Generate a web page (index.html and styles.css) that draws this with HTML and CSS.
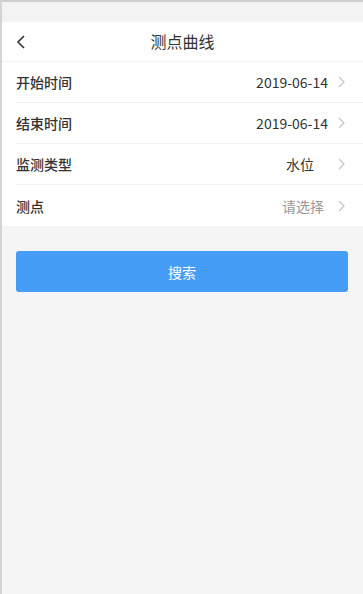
FILE: index.html
```html
<!DOCTYPE html>
<html>
    <head>
        <title>测点曲线</title>
        <link rel="stylesheet" href="styles.css">
    </head>
    <body>
        <div class="screen">
            <!-- status bar -->
            <div class="statusBar"></div>

            <!-- header -->
            <div class="header">
                <span class="back">
                    <svg width="10" height="14" viewBox="0 0 10 14"><path d="M8 1 L2 7 L8 13" fill="none" stroke="#333" stroke-width="1.6"/></svg>
                </span>
                <span class="title">测点曲线</span>
            </div>

            <!-- form list -->
            <div class="list">
                <div class="row">
                    <span class="label">开始时间</span>
                    <span class="value">2019-06-14</span>
                    <span class="arrow"><svg width="7" height="12" viewBox="0 0 7 12"><path d="M1 1 L6 6 L1 11" fill="none" stroke="#c4c4c4" stroke-width="1.2"/></svg></span>
                </div>
                <div class="row">
                    <span class="label">结束时间</span>
                    <span class="value">2019-06-14</span>
                    <span class="arrow"><svg width="7" height="12" viewBox="0 0 7 12"><path d="M1 1 L6 6 L1 11" fill="none" stroke="#c4c4c4" stroke-width="1.2"/></svg></span>
                </div>
                <div class="row">
                    <span class="label">监测类型</span>
                    <span class="value short">水位</span>
                    <span class="arrow"><svg width="7" height="12" viewBox="0 0 7 12"><path d="M1 1 L6 6 L1 11" fill="none" stroke="#c4c4c4" stroke-width="1.2"/></svg></span>
                </div>
                <div class="row">
                    <span class="label">测点</span>
                    <span class="value placeholder">请选择</span>
                    <span class="arrow"><svg width="7" height="12" viewBox="0 0 7 12"><path d="M1 1 L6 6 L1 11" fill="none" stroke="#c4c4c4" stroke-width="1.2"/></svg></span>
                </div>
            </div>

            <div class="actions">
                <button class="searchButton">搜索</button>
            </div>
        </div>
    </body>
</html>
```

FILE: styles.css
```css
html, body{
    margin: 0;
    height: 100%;
}

body{
    font-family: "Noto Sans CJK SC", "Noto Sans", sans-serif;
    color: #333;
}

.screen{
    height: 100%;
    box-sizing: border-box;
    border-top: 2px solid #cfcfcf;
    border-left: 2px solid #d4d4d4;
    background: #f5f5f5;
}

/* Status bar */

.statusBar{
    height: 20px;
    background: #f3f3f3;
}

/* Header */

.header{
    height: 39px;
    display: flex;
    align-items: center;
    justify-content: center;
    position: relative;
    background: #fff;
    border-bottom: 1px solid #f0f0f0;
}

.back{
    position: absolute;
    left: 14px;
    top: 13px;
    display: flex;
}

.title{
    font-size: 16px;
    color: #333;
    margin-top: -2px;
}

/* List */

.list{
    background: #fff;
    padding-left: 14px;
}

.row{
    height: 40px;
    display: flex;
    align-items: center;
    border-bottom: 1px solid #f2f2f2;
    padding-right: 18px;
}

.row:last-child{
    border-bottom: none;
    height: 41px;
}

.label{
    flex: 1;
    font-size: 14px;
    font-weight: 500;
    color: #333;
}

.value{
    font-size: 14px;
    color: #333;
}

.short{
    margin-right: 14px;
}

.placeholder{
    color: #999;
    margin-right: 4px;
}

.arrow{
    display: flex;
    margin-left: 10px;
}

/* Button */

.actions{
    padding: 25px 15px 0 14px;
}

.searchButton{
    width: 100%;
    height: 41px;
    border: none;
    border-radius: 3px;
    background: #469df5;
    color: #fff;
    font-family: "Noto Sans CJK SC", sans-serif;
    font-size: 14px;
}
```
